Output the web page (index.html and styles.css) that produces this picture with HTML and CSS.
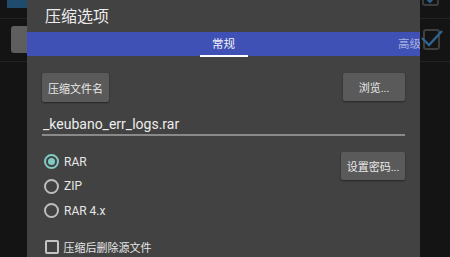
FILE: index.html
```html
<!DOCTYPE html>
<html lang="zh">
<head>
<meta charset="utf-8">
<title>压缩选项</title>
<link rel="stylesheet" href="styles.css">
</head>
<body>
<div class="screen">
  <div class="side side-left">
    <div class="bg-row bg-row-top"><span class="chip"></span></div>
    <div class="bg-row bg-row-mid"><span class="gray-btn"></span></div>
  </div>

  <div class="dialog">
    <div class="title">压缩选项</div>
    <div class="tabs">
      <span class="tab-spacer"></span>
      <span class="tab tab-active">常规</span>
      <span class="tab tab-next">高级</span>
    </div>
    <div class="content">
      <div class="row-buttons">
        <button class="btn btn-name">压缩文件名</button>
        <button class="btn btn-browse">浏览...</button>
      </div>
      <div class="field">_keubano_err_logs.rar</div>
      <div class="options">
        <div class="radios">
          <label class="radio-row"><span class="radio checked"></span><span class="radio-label">RAR</span></label>
          <label class="radio-row"><span class="radio"></span><span class="radio-label">ZIP</span></label>
          <label class="radio-row"><span class="radio"></span><span class="radio-label">RAR 4.x</span></label>
        </div>
        <button class="btn btn-password">设置密码...</button>
      </div>
      <label class="check-row"><span class="checkbox"></span><span class="check-label">压缩后删除源文件</span></label>
    </div>
  </div>

  <div class="side side-right">
    <div class="bg-row bg-row-top">
      <svg class="cb cb-top" width="18" height="18" viewBox="0 0 18 18"><rect x="1" y="1" width="15" height="15" rx="2" fill="none" stroke="#3d3d3d" stroke-width="2"/><path d="M4 9 L8 13 L15 5" fill="none" stroke="#2c5f8c" stroke-width="2.2"/></svg>
    </div>
    <div class="bg-row bg-row-mid">
      <svg class="cb cb-mid" width="26" height="24" viewBox="0 0 26 24"><rect x="4" y="3" width="15" height="19" rx="2" fill="none" stroke="#3f3f3f" stroke-width="2"/><path d="M2 11 L9 18 L22 4" fill="none" stroke="#2e6592" stroke-width="2.4"/></svg>
    </div>
  </div>
</div>
</body>
</html>
```
FILE: styles.css
```css
* { box-sizing: border-box; }
html, body {
  margin: 0;
  padding: 0;
  background: #141414;
  width: 450px;
  height: 257px;
  overflow: hidden;
  font-family: "Roboto", "Noto Sans CJK SC", sans-serif;
}
.screen {
  display: grid;
  grid-template-columns: 27px 393px 30px;
  height: 257px;
}
.side { overflow: hidden; }
.bg-row { border-bottom: 1px solid #232323; overflow: hidden; }
.bg-row-top { height: 19px; }
.bg-row-mid { height: 43px; }
.side-left .chip {
  display: block;
  margin-left: 7px;
  width: 20px;
  height: 8px;
  background: #1f4b6d;
}
.side-left .gray-btn {
  display: block;
  margin: 7px 0 0 11px;
  width: 16px;
  height: 27px;
  background: #5e5e5e;
  border-radius: 3px 0 0 3px;
}
.cb { display: block; }
.cb-top { margin: -11px 0 0 2px; }
.cb-mid { margin: 8px 0 0 0; }

.dialog {
  background: #424242;
  color: #e6e6e6;
  overflow: hidden;
}
.title {
  height: 32px;
  line-height: 34px;
  padding-left: 18px;
  font-size: 16px;
  color: #ececec;
}
.tabs {
  display: grid;
  grid-template-columns: 1fr auto 1fr;
  height: 24px;
  background: #3f51b5;
  font-size: 11.5px;
  line-height: 22px;
}
.tab { white-space: nowrap; }
.tab-active {
  padding: 1px 12.5px 0;
  color: #f2f2f8;
  border-bottom: 2.5px solid #ffffff;
}
.tab-next {
  justify-self: end;
  color: #a9b1e0;
  padding-top: 1px;
  margin-right: -1px;
}
.content {
  padding: 17px 15px 0 15px;
}
.btn {
  font-family: "Roboto", "Noto Sans CJK SC", sans-serif;
  font-size: 11px;
  color: #e8e8e8;
  background: #5a5a5a;
  border: none;
  border-radius: 2px;
  box-shadow: 0 1px 2px rgba(0,0,0,0.45);
  padding: 0;
  text-align: center;
}
.row-buttons {
  display: flex;
  justify-content: space-between;
  align-items: flex-start;
}
.btn-name { width: 67px; height: 29px; }
.btn-browse { width: 62px; height: 28px; }
.field {
  margin-top: 12px;
  font-size: 14px;
  line-height: 20px;
  color: #ededed;
  padding-left: 1px;
  border-bottom: 2px solid #8a8a8a;
}
.options {
  display: flex;
  justify-content: space-between;
  align-items: flex-start;
  margin-top: 13.5px;
}
.btn-password { width: 64px; height: 28px; margin-top: 2.5px; }
.radios { display: flex; flex-direction: column; }
.radio-row {
  display: flex;
  align-items: center;
  height: 24.5px;
}
.radio {
  width: 15px;
  height: 15px;
  margin-left: 2px;
  border: 2px solid #bdbdbd;
  border-radius: 50%;
  display: flex;
  align-items: center;
  justify-content: center;
}
.radio.checked { border-color: #80cbc4; }
.radio.checked::after {
  content: "";
  width: 7px;
  height: 7px;
  border-radius: 50%;
  background: #80cbc4;
}
.radio-label {
  margin-left: 5px;
  font-size: 12px;
  color: #e6e6e6;
}
.check-row {
  display: flex;
  align-items: center;
  height: 24px;
  margin-top: 12px;
}
.checkbox {
  width: 14px;
  height: 14px;
  margin-left: 2.5px;
  border: 2px solid #c4c4c4;
  border-radius: 2px;
}
.check-label {
  margin-left: 5px;
  font-size: 11px;
  color: #e6e6e6;
}
```
